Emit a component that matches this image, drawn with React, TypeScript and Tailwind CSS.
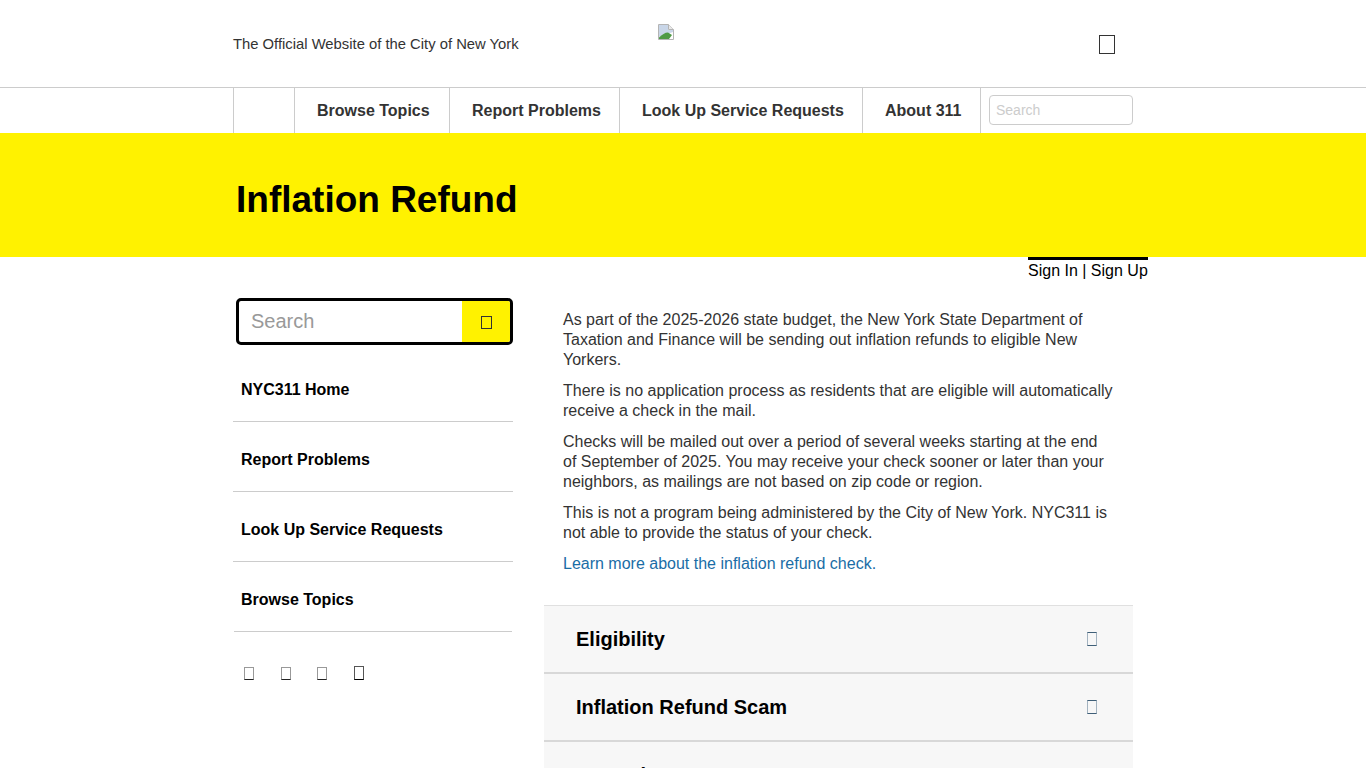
const NAV = [
  { label: "Browse Topics", width: "w-[155px]" },
  { label: "Report Problems", width: "w-[170px]" },
  { label: "Look Up Service Requests", width: "w-[243px]" },
  { label: "About 311", width: "w-[118px]" },
];

const SIDE_LINKS = ["NYC311 Home", "Report Problems", "Look Up Service Requests", "Browse Topics"];

function BrokenImage() {
  return (
    <svg width="16" height="16" viewBox="0 0 16 16" className="block">
      <path d="M0.5 0.5H10.5L15.5 5.5V15.5H0.5Z" fill="#fff" stroke="#b4b4b4" />
      <path d="M10.5 0.5V5.5H15.5" fill="#e8e8e8" stroke="#b4b4b4" />
      <path d="M1 1H10V6H15V8L9 10L1 13Z" fill="#c9d6e8" />
      <path d="M1 15V13.5C4 10.5 7 8.5 10 8.5L14 11L11 15Z" fill="#4f9a45" />
    </svg>
  );
}

export default function App() {
  return (
    <div className="h-[768px] overflow-hidden bg-white font-['Liberation_Sans',Arial,sans-serif] text-[#333]">
      {/* Top bar */}
      <div className="mx-auto flex h-[87px] w-[900px] items-center">
        <p className="mt-[2px] w-[425px] text-[14.8px]">The Official Website of the City of New York</p>
        <div className="mb-[23px]"><BrokenImage /></div>
        <div className="ml-[425px] mt-px h-[19px] w-4 border border-[#333]" />
      </div>

      {/* Nav */}
      <div className="h-[46px] border-t border-[#ccc]">
        <div className="mx-auto flex h-[45px] w-[900px] items-stretch">
          <div className="w-[62px] border-x border-[#ccc]" />
          {NAV.map((item) => (
            <div key={item.label} className={`flex items-center border-r border-[#ccc] pl-[22px] text-base font-bold ${item.width}`}>
              {item.label}
            </div>
          ))}
          <div className="ml-2 flex items-center pb-[2px]">
            <input
              placeholder="Search"
              className="h-[30px] w-[144px] rounded border border-[#ccc] px-[6px] text-sm outline-none placeholder:text-[#ccc]"
            />
          </div>
        </div>
      </div>

      {/* Hero */}
      <div className="h-[124px] bg-[#fff200]">
        <div className="mx-auto flex h-full w-[900px] items-center pt-[10px]">
          <h1 className="ml-[3px] text-[37px] font-bold text-black">Inflation Refund</h1>
        </div>
      </div>

      <div className="mx-auto w-[900px]">
        {/* Sign in */}
        <div className="relative h-0">
          <div className="absolute left-[795px] top-0 w-[120px] border-t-[3px] border-black pt-px text-base leading-[20px] text-black">
            Sign In | Sign Up
          </div>
        </div>

        <div className="flex pt-[41px]">
          {/* Sidebar */}
          <div className="w-[280px] shrink-0">
            <div className="ml-[3px] flex h-[47px] w-[277px] overflow-hidden rounded-[5px] border-[3px] border-black">
              <input placeholder="Search" className="min-w-0 flex-1 pb-[2px] pl-3 text-xl outline-none placeholder:text-[#999]" />
              <div className="flex w-12 items-center justify-center bg-[#fff200]">
                <div className="mt-[2px] h-[13px] w-[11px] border border-[#333]" />
              </div>
            </div>
            <ul className="mt-[7px]">
              {SIDE_LINKS.map((link) => (
                <li key={link} className="flex h-[70px] items-center border-b border-[#ccc] pl-2 pt-[6px] text-base font-bold text-black last:mx-px last:pl-[7px]">
                  {link}
                </li>
              ))}
            </ul>
            <div className="mt-[34px] flex items-end gap-[26.67px] pl-[11px]">
              <div className="h-[13px] w-[10px] border border-[#999] border-b-[#222]" />
              <div className="h-[13px] w-[10px] border border-[#999] border-b-[#222]" />
              <div className="h-[13px] w-[10px] border border-[#999] border-b-[#222]" />
              <div className="h-[14px] w-[10px] border border-[#555] border-b-black" />
            </div>
          </div>

          {/* Main */}
          <div className="ml-[31px] w-[589px]">
            <div className="space-y-[11px] pl-[19px] pr-5 pt-3 text-base leading-[20px]">
              <p>As part of the 2025-2026 state budget, the New York State Department of Taxation and Finance will be sending out inflation refunds to eligible New Yorkers.</p>
              <p>There is no application process as residents that are eligible will automatically receive a check in the mail.</p>
              <p>Checks will be mailed out over a period of several weeks starting at the end of September of 2025. You may receive your check sooner or later than your neighbors, as mailings are not based on zip code or region.</p>
              <p>This is not a program being administered by the City of New York. NYC311 is not able to provide the status of your check.</p>
              <p><a href="#" className="text-[#1a6da6]">Learn more about the inflation refund check.</a></p>
            </div>

            <div className="mt-[31px] border-t border-[#e0e0e0]">
              {["Eligibility", "Inflation Refund Scam", "Get Help"].map((title) => (
                <div key={title} className="flex h-[68px] items-center justify-between border-b-2 border-[#d8d8d8] bg-[#f7f7f7] pl-8 pr-[36px]">
                  <span className="text-xl font-bold text-black">{title}</span>
                  <div className="h-[14px] w-[10px] border border-[#a3b3c0] border-y-[#3f5f78]" />
                </div>
              ))}
            </div>
          </div>
        </div>
      </div>
    </div>
  );
}
